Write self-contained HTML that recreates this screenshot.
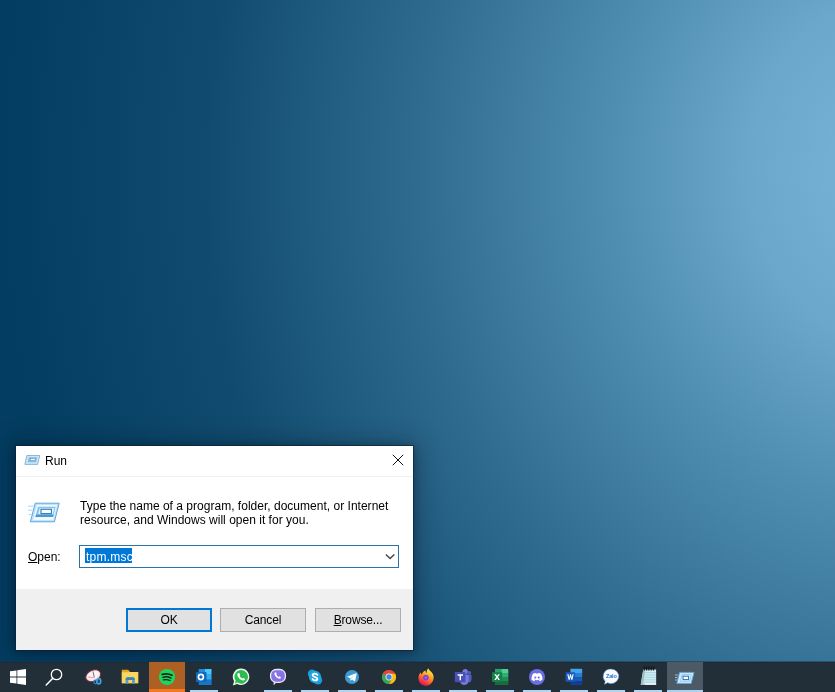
<!DOCTYPE html>
<html>
<head>
<meta charset="utf-8">
<title>Run</title>
<style>
*{box-sizing:border-box;margin:0;padding:0}
html,body{width:835px;height:692px;overflow:hidden}
body{position:relative;font-family:"Liberation Sans",sans-serif;font-size:12px;color:#000;
  background:
   radial-gradient(ellipse 900px 1035px at 900px 170px,#77b4d8 0%,#72afd3 7.8%,#6aa7cb 17%,#508eb2 31.5%,#2e6b8f 53.8%,#114c70 76.9%,#033d61 99.5%);
  background-color:#033d61;}
.abs{position:absolute}
/* ---------- dialog ---------- */
#dlg{will-change:transform;position:absolute;left:16px;top:446px;width:397px;height:204px;background:#fff;
  box-shadow:0 0 0 1px rgba(8,34,56,.6),0 1px 7px 1px rgba(0,16,32,.32),0 1px 24px 4px rgba(0,14,30,.30);}
#ttl{position:absolute;left:0;top:0;width:397px;height:31px;border-bottom:1px solid #efefef}
#ttl .t{position:absolute;left:29px;top:8px;font-size:12px;line-height:14px}
#body-txt{letter-spacing:.015px;position:absolute;left:64px;top:53px;width:330px;font-size:12px;line-height:14px;white-space:nowrap}
#open{position:absolute;left:12px;top:104px;font-size:12px;line-height:14px}
#open u{text-decoration:underline}
#combo{position:absolute;left:63px;top:99px;width:320px;height:23px;border:1px solid #2a72a8;background:#fff}
#sel{position:absolute;left:5px;top:2px;width:47px;height:15px;background:#0078d7;color:#fff;font-size:12px;line-height:15px;letter-spacing:.22px;white-space:nowrap;padding-left:1px}
#foot{position:absolute;left:0;top:143px;width:397px;height:61px;background:#f0f0f0}
.btn{letter-spacing:-.15px;position:absolute;top:162px;width:86px;height:24px;background:#e1e1e1;border:1px solid #adadad;font-size:12px;line-height:22px;text-align:center}
.btn.def{border:2px solid #0078d7;line-height:20px}
/* ---------- taskbar ---------- */
#tb{position:absolute;left:0;top:662px;width:835px;height:30px;background:#222e38;box-shadow:inset 0 1px 0 #1b2b3a,0 -1px 0 rgba(30,50,64,.5)}
.cell{position:absolute;top:0;height:30px;width:36px}
.ul{position:absolute;bottom:0;height:2px;width:28px;background:#acd5f3}
.ic{position:absolute}
</style>
</head>
<body>

<div id="dlg">
  <div id="ttl">
    <svg class="abs" style="left:8px;top:8px" width="17" height="12" viewBox="0 0 17 12">
      <path d="M2.800 1.500H15.800L13.600 10.400H.9Z" fill="#c9e8f7" stroke="#86afd0" stroke-width=".9"/>
      <path d="M4.900 3.200H13.300L12.100 8.300H3.600Z" fill="#8bbbe0"/>
      <rect x="6.200" y="4.400" width="5" height="2.300" fill="#fff" stroke="#5f9acb" stroke-width=".7"/>
    </svg>
    <div class="t">Run</div>
    <svg class="abs" style="left:376px;top:8px" width="12" height="12" viewBox="0 0 12 12"><path d="M.8 .8L11.200 11.200M11.200 .8L.8 11.200" stroke="#111" stroke-width="1" fill="none"/></svg>
  </div>

  <svg class="abs" style="left:11px;top:55px" width="34" height="24" viewBox="0 0 34 24">
    <path d="M8.200 2.200H32.200L27.400 20.800H3.400Z" fill="#bfe3f8" stroke="#5ca8df" stroke-width="1"/>
    <path d="M10 4.100H30L26.100 18.900H6.100Z" fill="#f1f9fe"/>
    <path d="M11 5.800H28.700L26.100 16.100H8.300Z" fill="#8ac3ea"/>
    <path d="M9 13.700L8.300 16.100H26.100L26.700 13.700Z" fill="#4a99d5"/>
    <path d="M12.800 7.200H27.200L25.800 13H11.300Z" fill="#e9f5fd"/>
    <rect x="14" y="8.300" width="10.400" height="4.300" fill="#fff" stroke="#2f7cba" stroke-width="1.100"/>
    <path d="M1 5.200h5.400M1.300 9.200h4M1.600 13.400h3" stroke="#aed2ec" stroke-width="1"/>
  </svg>

  <div id="body-txt">Type the name of a program, folder, document, or Internet<br>resource, and Windows will open it for you.</div>

  <div id="open"><u>O</u>pen:</div>
  <div id="combo">
    <div id="sel"><span style="position:relative;top:2px">tpm.msc</span></div>
    <svg class="abs" style="left:305px;top:7px" width="11" height="7" viewBox="0 0 11 7"><path d="M.9 1.500L5.100 5.500L9.300 1.500" stroke="#484848" stroke-width="1.500" fill="none"/></svg>
  </div>

  <div id="foot"></div>
  <div class="btn def" style="left:110px">OK</div>
  <div class="btn" style="left:204px">Cancel</div>
  <div class="btn" style="left:299px"><u>B</u>rowse...</div>
</div>

<div id="tb">
  <!-- start -->
  <svg class="ic" style="left:10px;top:7px" width="16" height="16" viewBox="0 0 16 16"><path fill="#fff" d="M0 2.3L6.5 1.4V7.6H0ZM7.3 1.3L16 0V7.6H7.3ZM0 8.4H6.5V14.6L0 13.7ZM7.3 8.4H16V16L7.3 14.7Z"/></svg>
  <!-- search -->
  <svg class="ic" style="left:44px;top:5px" width="20" height="20" viewBox="0 0 20 20"><circle cx="12.5" cy="7.5" r="5.2" fill="none" stroke="#fff" stroke-width="1.3"/><path d="M8.8 11.2L2.2 18" stroke="#fff" stroke-width="1.5" stroke-linecap="round"/></svg>

  <!-- snipping tool -->
  <svg class="ic" style="left:83px;top:5px" width="20" height="20" viewBox="0 0 20 20">
    <ellipse cx="10.2" cy="8.7" rx="7.8" ry="5.5" transform="rotate(-25 10.2 8.7)" fill="#f6e3e8" stroke="#7c2a3b" stroke-width="1"/>
    <ellipse cx="10.4" cy="8.3" rx="6" ry="3.6" transform="rotate(-25 10.4 8.3)" fill="#fdf5f7"/>
    <path d="M10 4.600L11.400 10.600" stroke="#6b6f76" stroke-width="1" fill="none"/>
    <path d="M5.200 9.600C7.400 10.800 9.600 11 12 10.200" stroke="#e9a9b6" stroke-width="1.200" fill="none"/>
    <circle cx="12.600" cy="15" r="1.700" fill="none" stroke="#2e79ad" stroke-width="1.400"/>
    <ellipse cx="15.800" cy="14.200" rx="2" ry="2.700" fill="#1d4d78" stroke="#4aa3d6" stroke-width="1.500"/>
  </svg>
  <!-- explorer -->
  <svg class="ic" style="left:120px;top:5px" width="20" height="20" viewBox="0 0 20 20">
    <path d="M1.800 2.800h6.400l1.900 2.100h8.100v11.300H1.800z" fill="#e5a620"/>
    <path d="M1.800 5.300h6.200l1.200-.4h9v11.300H1.800z" fill="#fad661"/>
    <path d="M5.600 16.600V12.400a2.200 2.200 0 0 1 2.200-2.200h4.800a2.200 2.200 0 0 1 2.200 2.200v4.200h-2.700v-3.500H8.300v3.500z" fill="#519fd3"/>
    <path d="M5.600 12.400a2.200 2.200 0 0 1 2.200-2.200h4.800a2.200 2.200 0 0 1 2.200 2.200v.6H5.600z" fill="#3b83b8"/>
  </svg>
  <!-- spotify (attention) -->
  <div class="cell" style="left:149px;background:#ae6024"><div style="position:absolute;left:0;right:0;bottom:0;height:3px;background:#f3781e"></div></div>
  <svg class="ic" style="left:157.400px;top:4.800px" width="20" height="20" viewBox="0 0 20 20">
    <circle cx="10" cy="10" r="8.1" fill="#1ed35e"/>
    <path d="M5.2 7.4c3.4-1 7-.7 9.8.9" stroke="#10241a" stroke-width="1.7" fill="none" stroke-linecap="round"/>
    <path d="M5.8 10.3c2.8-.8 5.8-.5 8.2.8" stroke="#10241a" stroke-width="1.4" fill="none" stroke-linecap="round"/>
    <path d="M6.3 12.9c2.3-.6 4.7-.4 6.6.7" stroke="#10241a" stroke-width="1.2" fill="none" stroke-linecap="round"/>
  </svg>
  <!-- outlook -->
  <div class="ul" style="left:190px"></div>
  <svg class="ic" style="left:194px;top:5px" width="20" height="20" viewBox="0 0 20 20">
    <path d="M4.800 2H17.400V18H4.800z" fill="#1687d6"/>
    <path d="M4.800 2H11V7H4.800z" fill="#1c8fdc"/>
    <path d="M11 2H17.400V7H11z" fill="#4cc6f4"/>
    <path d="M11 7H17.400V12.600H11z" fill="#36aaea"/>
    <path d="M4.800 12.600H17.400V18H4.800z" fill="#1576c6"/>
    <rect x="2" y="5.100" width="10.500" height="9.900" rx=".8" fill="#0f6abb"/>
    <ellipse cx="6.900" cy="10" rx="2.500" ry="2.600" fill="none" stroke="#fff" stroke-width="1.600"/>
  </svg>
  <!-- whatsapp -->
  <svg class="ic" style="left:231px;top:5px" width="20" height="20" viewBox="0 0 20 20">
    <path d="M10.2 1.6a8.2 8.2 0 1 1-4 15.4L1.8 18.4l1.3-4.2A8.2 8.2 0 0 1 10.2 1.6z" fill="#e9f7ec"/>
    <path d="M10.2 3a6.8 6.8 0 1 1-3.6 12.6L3.9 16.4l.8-2.7A6.8 6.8 0 0 1 10.2 3z" fill="#2cbd4f"/>
    <path d="M7.4 6.3c.5-.5 1.1-.2 1.3.4l.4 1c.1.4-.1.7-.5 1 .6 1.300 1.500 2.200 2.800 2.800.3-.4.600-.600 1-.5l1 .4c.6.200.9.800.4 1.300-.7.800-1.700 1-2.700.6-2.200-.8-3.900-2.500-4.700-4.700-.3-.9-.1-1.700.6-2.300z" fill="#fff"/>
  </svg>
  <!-- viber -->
  <div class="ul" style="left:264px"></div>
  <svg class="ic" style="left:268px;top:5px" width="20" height="20" viewBox="0 0 20 20">
    <path d="M5.600 15v3.200l2.800-2.600z" fill="#ece8fb"/>
    <rect x="2.600" y="2.500" width="14.800" height="12.800" rx="5.600" fill="#8674e6" stroke="#ebe7fb" stroke-width="1.300"/>
    <path d="M7.200 5.500c.4-.4.900-.2 1.100.3l.4.900c.1.300-.1.600-.4.900.5 1.100 1.300 1.900 2.400 2.400.3-.3.600-.5.900-.4l.9.400c.5.200.7.700.3 1.100-.6.700-1.400.8-2.300.5-1.900-.7-3.300-2.100-4-4-.3-.9-.1-1.500.7-2.100z" fill="#fff"/>
  </svg>
  <!-- skype -->
  <div class="ul" style="left:301px"></div>
  <svg class="ic" style="left:305px;top:5px" width="20" height="20" viewBox="0 0 20 20"><g transform="translate(10 10) scale(.88) translate(-10 -10)">
    <circle cx="6.600" cy="6.400" r="4.800" fill="#1b9ad8"/>
    <circle cx="13.400" cy="13.600" r="4.800" fill="#1b9ad8"/>
    <circle cx="10" cy="10" r="7" fill="#22a7e4"/>
    <path d="M12.600 7.600c-.5-1-1.500-1.500-2.700-1.500-1.500 0-2.600.8-2.600 2 0 2.600 5.400 1.300 5.400 3.800 0 1.200-1.200 2-2.700 2-1.400 0-2.400-.6-2.900-1.700" fill="none" stroke="#fff" stroke-width="2" stroke-linecap="round"/>
  </g></svg>
  <!-- telegram -->
  <div class="ul" style="left:338px"></div>
  <svg class="ic" style="left:342px;top:5px" width="20" height="20" viewBox="0 0 20 20"><g transform="translate(10 10) scale(.88) translate(-10 -10)">
    <circle cx="10" cy="10" r="8" fill="#3d9bd4"/>
    <path d="M4.400 9.800L14.600 5.700c.5-.2.800.1.700.7L13.600 14.300c-.1.500-.5.600-.9.400L10.100 12.800 8.800 14c-.2.200-.5.100-.5-.2l-.3-2.500z" fill="#fff"/>
    <path d="M8 11.300L13.200 7.400 9.300 11.900 8.700 14z" fill="#b9d8ee"/>
  </g></svg>
  <!-- chrome -->
  <div class="ul" style="left:375px"></div>
  <svg class="ic" style="left:379px;top:5px" width="20" height="20" viewBox="0 0 20 20"><g transform="translate(10 10) scale(.88) translate(-10 -10)">
    <circle cx="10" cy="10" r="8" fill="#e2453c"/>
    <path d="M10 10L3.070 6A8 8 0 0 0 10 18L13.460 12z" fill="#38a755" />
    <path d="M10 18A8 8 0 0 0 16.930 6H10L13.460 12z" fill="#f4c20d"/>
    <path d="M3.070 6A8 8 0 0 1 16.930 6H10z" fill="#e2453c"/>
    <circle cx="10" cy="10" r="3.900" fill="#f1f1f1"/>
    <circle cx="10" cy="10" r="3" fill="#4a86e0"/>
  </g></svg>
  <!-- firefox -->
  <div class="ul" style="left:412px"></div>
  <svg class="ic" style="left:416px;top:4px" width="20" height="21" viewBox="0 0 20 21">
    <defs><linearGradient id="ff" x1=".8" y1="0" x2=".3" y2="1"><stop offset="0" stop-color="#fff24a"/><stop offset=".3" stop-color="#ffc02e"/><stop offset=".55" stop-color="#ff7e2a"/><stop offset=".85" stop-color="#f02a4a"/><stop offset="1" stop-color="#c41a68"/></linearGradient>
    <radialGradient id="fp" cx=".5" cy=".5" r=".5"><stop offset="0" stop-color="#a168f4"/><stop offset=".7" stop-color="#7a3ed2"/><stop offset="1" stop-color="#7a3ed2" stop-opacity="0"/></radialGradient></defs>
    <path d="M12.200 2.300C13 4.500 15.500 5.500 16.800 8C18.600 11.500 17.400 16 14 18.400C10.500 20.800 5.600 19.800 3.400 16.200C1.600 13.200 2.200 9.200 4.600 6.300C4.800 7.400 5.200 8 5.900 8.500C6.400 6.500 8 5 9.600 4.600C9.400 5.600 9.800 6.400 10.600 7C10.600 5 11.200 3.400 12.200 2.300Z" fill="url(#ff)"/>
    <circle cx="9.900" cy="11.600" r="3.300" fill="url(#fp)"/>
  </svg>
  <!-- teams -->
  <div class="ul" style="left:449px"></div>
  <svg class="ic" style="left:453px;top:5px" width="20" height="20" viewBox="0 0 20 20">
    <circle cx="12.200" cy="4.600" r="2.700" fill="#747ce0"/>
    <circle cx="16.400" cy="5.800" r="1.700" fill="#535bc0"/>
    <path d="M13.800 7.600h4c.4 0 .7.300.7.700v4.500a2.800 2.800 0 0 1-4.700 1.800z" fill="#535bc0"/>
    <path d="M7.400 7.600h7.300c.5 0 .9.400.9.900v5.100a4.400 4.400 0 0 1-8.200 2.200z" fill="#747ce0"/>
    <rect x="1.800" y="5" width="10.700" height="10.200" rx=".9" fill="#4850b4"/>
    <path d="M4.600 7.300h5.400v1.400H8v4.500H6.600V8.700H4.600z" fill="#fff"/>
  </svg>
  <!-- excel -->
  <div class="ul" style="left:486px"></div>
  <svg class="ic" style="left:490px;top:5px" width="20" height="20" viewBox="0 0 20 20">
    <path d="M5 1.900H17.400c.4 0 .8.400.8.800V17.200c0 .4-.4.800-.8.800H5z" fill="#1f9a5b"/>
    <path d="M5 1.900H11.600V6H5z" fill="#27a567"/>
    <path d="M11.600 1.900h5.800c.4 0 .8.400.8.800V6h-6.600z" fill="#55cb95"/>
    <path d="M11.600 6h6.600v4h-6.600z" fill="#2db072"/>
    <path d="M11.600 10h6.600v4h-6.600z" fill="#1c8f54"/>
    <path d="M5 14h13.200v3.200c0 .4-.4.800-.8.800H5z" fill="#186c40"/>
    <rect x="2" y="5.300" width="10.200" height="9.700" rx=".9" fill="#16804a"/>
    <path d="M4.300 7.300h1.700l1.100 1.800 1.100-1.800h1.700L8 10.100l1.900 2.800H8.200L7.100 11.100 6 12.900H4.300l1.900-2.800z" fill="#fff"/>
  </svg>
  <!-- discord -->
  <div class="ul" style="left:523px"></div>
  <svg class="ic" style="left:527px;top:5px" width="20" height="20" viewBox="0 0 20 20">
    <circle cx="10" cy="10" r="8" fill="#6a6fe3"/>
    <path d="M13.700 6.600a9 9 0 0 0-2.300-.7l-.3.600a8 8 0 0 0-2.300 0l-.3-.600a9 9 0 0 0-2.300.7c-1.400 2.100-1.800 4.200-1.600 6.200a9 9 0 0 0 2.800 1.400l.6-1a6 6 0 0 1-.9-.4l.2-.2a6.500 6.500 0 0 0 5.400 0l.2.200a6 6 0 0 1-.9.400l.6 1a9 9 0 0 0 2.800-1.400c.2-2.400-.4-4.400-1.700-6.200zM8.300 11.600c-.6 0-1-.5-1-1.100s.4-1.100 1-1.100 1 .5 1 1.100-.4 1.100-1 1.100zm3.400 0c-.6 0-1-.5-1-1.100s.4-1.100 1-1.100 1 .5 1 1.100-.4 1.100-1 1.100z" fill="#fff"/>
  </svg>
  <!-- word -->
  <div class="ul" style="left:560px"></div>
  <svg class="ic" style="left:564px;top:5px" width="20" height="20" viewBox="0 0 20 20">
    <path d="M6.400 1.800H17.400c.4 0 .8.400.8.800V6H6.400z" fill="#41a5ee"/>
    <path d="M6.400 6h11.800v4.100H6.400z" fill="#2b7cd3"/>
    <path d="M6.400 10.100h11.800v4.100H6.400z" fill="#185abd"/>
    <path d="M6.400 14.200h11.800v3.200c0 .4-.4.800-.8.800H6.400z" fill="#103f91"/>
    <rect x="1.600" y="5.200" width="9.600" height="9.600" rx=".9" fill="#185abd"/>
    <path d="M3.300 7.300h1.200l.7 3.600.8-3.600h1l.8 3.600.7-3.600h1.200l-1.300 5.400H7.200L6.500 9.500l-.7 3.200H4.600z" fill="#fff"/>
  </svg>
  <!-- zalo -->
  <div class="ul" style="left:597px"></div>
  <svg class="ic" style="left:601px;top:5px" width="20" height="20" viewBox="0 0 20 20">
    <path d="M10.200 2a7.700 7.300 0 1 1-3.600 13.800L3.400 17.600l.7-3.400A7.700 7.300 0 0 1 10.200 2z" fill="#f7fafe" stroke="#3b78cf" stroke-width=".5"/>
    <text x="10.300" y="11" font-family="Liberation Sans, sans-serif" font-size="5.600" font-weight="700" fill="#2a6fd0" text-anchor="middle" letter-spacing="-.2">Zalo</text>
  </svg>
  <!-- notepad -->
  <div class="ul" style="left:634px"></div>
  <svg class="ic" style="left:638px;top:2px" width="20" height="22" viewBox="0 0 20 22">
    <path d="M5.300 5.600H18.100V20.700H2.700z" fill="#d4edf2"/>
    <path d="M5.300 5.600H7.400L5.200 20.700H2.700z" fill="#9ebfc2"/>
    <path d="M7.200 8.600h10.900M6.800 11h11.300M6.500 13.400h11.600M6.100 15.800h12M5.800 18.200h12.300" stroke="#a2d4e2" stroke-width="1"/>
    <path d="M7.300 19.600H18.100V20.700H7.100z" fill="#f3fafb"/>
    <path d="M6.300 2.400v4.200M8.600 2.400v4.200M10.900 2.400v4.200M13.200 2.400v4.200M15.500 2.400v4.200" stroke="#11181d" stroke-width="1.300"/>
  </svg>
  <!-- run (active) -->
  <div class="cell" style="left:667px;background:#4c5a66"><div style="position:absolute;left:0;right:0;bottom:0;height:2px;background:#a6d3f3"></div></div>
  <svg class="ic" style="left:675px;top:5.600px" width="20" height="20" viewBox="0 0 20 20">
    <path d="M4.600 4.400H19L16.200 15.400H1.800z" fill="#cfe8f9" stroke="#5fa6dc" stroke-width="1"/>
    <path d="M7 6.600H16.200L14.600 13.200H5.400z" fill="#eef8fe" stroke="#86c0ea" stroke-width=".8"/>
    <rect x="8" y="8.200" width="5.600" height="3.400" fill="#fff" stroke="#2f7ab5" stroke-width="1.100"/>
    <path d="M0 7h3M0 9.500h2.400M0 12h1.800" stroke="#9ccbed" stroke-width=".9"/>
  </svg>
</div>

</body>
</html>
